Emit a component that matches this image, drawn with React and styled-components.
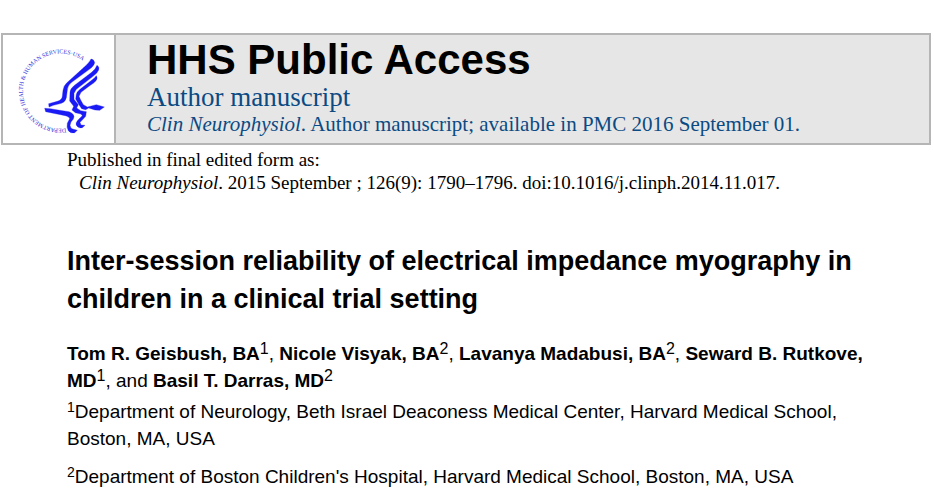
import React from 'react';
import styled, { createGlobalStyle } from 'styled-components';

const sans = '"Liberation Sans", Arial, sans-serif';
const serif = '"Liberation Serif", "Times New Roman", serif';

const GlobalStyle = createGlobalStyle`
  body {
    margin: 0;
    background: #fff;
    color: #000;
  }
`;

const Page = styled.main`
  padding: 33px 3px 8px 1px;
`;

const Banner = styled.header`
  display: flex;
  border: 2px solid #b5b5b5;
  background: #e6e6e6;
`;

const LogoCell = styled.div`
  flex: none;
  display: flex;
  width: 111px;
  background: #fff;
  border-right: 2px solid #b5b5b5;
`;

const Logo = styled.svg`
  display: block;
  width: 111px;
  height: 108px;
`;

const BannerText = styled.div`
  padding: 1px 8px 6px 31px;
  color: #0b4a83;
  font-family: ${serif};
`;

const BannerTitle = styled.p`
  margin: 0;
  color: #000;
  font: bold 42px/48px ${sans};
`;

const BannerKind = styled.p`
  margin: 0;
  font-size: 27px;
  line-height: 27px;
`;

const BannerSource = styled.p`
  margin: 0;
  font-size: 21px;
  line-height: 26px;
`;

const Article = styled.article`
  padding: 3px 48px 0 66px;
  font: 19px/27px ${sans};
`;

const Citation = styled.div`
  font: 19px/23px ${serif};
`;

const CitationLine = styled.p`
  margin: 0;
  padding-left: ${({ $indent }) => ($indent ? '12px' : '0')};
`;

const Title = styled.h1`
  margin: 48px 0 22px;
  font: bold 27px/38px ${sans};
`;

const Authors = styled.p`
  margin: 0 0 4px;
`;

const Affiliation = styled.p`
  margin: 0 0 11px;
`;

const Mark = styled.sup`
  font-size: ${({ $small }) => ($small ? '14px' : '16px')};
  line-height: 0;
  vertical-align: 6px;
`;

function HhsLogo() {
  return (
    <Logo viewBox="9 15 333 324" role="img" aria-label="Department of Health and Human Services, USA">
      <defs>
        <path id="ring" d="M198 295 A113 113 0 1 1 274 118" />
      </defs>
      <text fill="#2f2dd8" fontFamily="Liberation Serif, serif" fontSize="18">
        <textPath href="#ring">DEPARTMENT OF HEALTH &amp; HUMAN SERVICES·USA</textPath>
      </text>
      <g fill="#1a1af5" stroke="#1a1af5" strokeWidth="1" strokeLinejoin="round">
        <path d="M273 87 Q282 88 284 98 Q282 108 268 118 L215 157 Q202 168 202 180 L199 203 Q196 216 184 220 L160 226 L147 231 L146 221 L172 214 Q186 210 187 199 L189 181 Q190 168 200 159 L252 112 Q268 98 273 87 Z" />
        <path d="M291 106 Q299 111 296 120 Q292 130 279 139 L229 178 L222 190 L222 208 L235 224 L230 234 L242 242 L259 245 L257 259 L249 268 L240 277 L243 285 L255 286 L247 293 Q235 297 229 286 Q225 278 237 267 L247 257 L243 252 L226 248 L216 240 L221 229 L209 213 L210 187 Q210 177 222 167 L275 127 Q287 118 291 106 Z" />
        <path d="M289 137 Q294 144 288 152 Q281 160 269 167 L243 187 L237 199 L242 210 L250 224 L262 231 L289 224 L313 231 L299 241 L285 240 L266 234 L257 239 L245 236 L236 223 L227 207 L229 193 Q230 186 240 178 L272 153 Q284 145 289 137 Z" />
        <path d="M134 235 L151 236 L179 241 L207 245 Q222 251 222 260 Q222 267 213 276 L210 286 Q211 295 218 297 L232 301 L224 308 Q212 311 205 302 Q199 293 202 280 L209 266 Q208 260 196 257 L171 252 L137 245 Z" />
      </g>
    </Logo>
  );
}

export default function App() {
  return (
    <>
      <GlobalStyle />
      <Page>
        <Banner>
          <LogoCell>
            <HhsLogo />
          </LogoCell>
          <BannerText>
            <BannerTitle>HHS Public Access</BannerTitle>
            <BannerKind>Author manuscript</BannerKind>
            <BannerSource>
              <em>Clin Neurophysiol</em>. Author manuscript; available in PMC 2016 September 01.
            </BannerSource>
          </BannerText>
        </Banner>
        <Article>
          <Citation>
            <CitationLine>Published in final edited form as:</CitationLine>
            <CitationLine $indent>
              <em>Clin Neurophysiol</em>. 2015 September ; 126(9): 1790–1796. doi:10.1016/j.clinph.2014.11.017.
            </CitationLine>
          </Citation>
          <Title>Inter-session reliability of electrical impedance myography in children in a clinical trial setting</Title>
          <Authors>
            <b>Tom R. Geisbush, BA</b><Mark>1</Mark>, <b>Nicole Visyak, BA</b><Mark>2</Mark>,{' '}
            <b>Lavanya Madabusi, BA</b><Mark>2</Mark>, <b>Seward B. Rutkove, MD</b><Mark>1</Mark>, and{' '}
            <b>Basil T. Darras, MD</b><Mark>2</Mark>
          </Authors>
          <Affiliation>
            <Mark $small>1</Mark>Department of Neurology, Beth Israel Deaconess Medical Center, Harvard Medical School, Boston, MA, USA
          </Affiliation>
          <Affiliation>
            <Mark $small>2</Mark>Department of Boston Children's Hospital, Harvard Medical School, Boston, MA, USA
          </Affiliation>
        </Article>
      </Page>
    </>
  );
}
